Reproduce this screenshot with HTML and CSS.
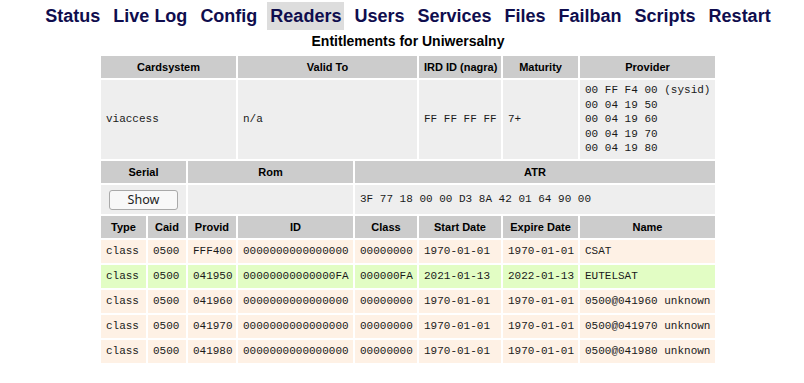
FILE: index.html
```html
<!DOCTYPE html>
<html>
<head>
<meta charset="utf-8">
<title>Readers - Entitlements</title>
<link rel="stylesheet" href="styles.css">
</head>
<body>
<div class="page">
  <nav class="nav">
    <a class="nav-item">Status</a>
    <a class="nav-item">Live Log</a>
    <a class="nav-item">Config</a>
    <a class="nav-item active">Readers</a>
    <a class="nav-item">Users</a>
    <a class="nav-item">Services</a>
    <a class="nav-item">Files</a>
    <a class="nav-item">Failban</a>
    <a class="nav-item">Scripts</a>
    <a class="nav-item">Restart</a>
  </nav>
  <div class="title">Entitlements for Uniwersalny</div>
  <table class="ent">
    <colgroup>
      <col class="c-type"><col class="c-caid"><col class="c-provid"><col class="c-id">
      <col class="c-class"><col class="c-start"><col class="c-expire"><col class="c-name">
    </colgroup>
    <tr class="head">
      <th colspan="3">Cardsystem</th>
      <th colspan="2">Valid To</th>
      <th>IRD ID (nagra)</th>
      <th>Maturity</th>
      <th>Provider</th>
    </tr>
    <tr class="info">
      <td colspan="3">viaccess</td>
      <td colspan="2">n/a</td>
      <td>FF FF FF FF</td>
      <td>7+</td>
      <td class="prov">00 FF F4 00 (sysid)<br>00 04 19 50<br>00 04 19 60<br>00 04 19 70<br>00 04 19 80</td>
    </tr>
    <tr class="head">
      <th colspan="2">Serial</th>
      <th colspan="2">Rom</th>
      <th colspan="4">ATR</th>
    </tr>
    <tr class="info">
      <td colspan="2" class="btn-cell"><button class="show-btn" type="button">Show</button></td>
      <td colspan="2"></td>
      <td colspan="4">3F 77 18 00 00 D3 8A 42 01 64 90 00</td>
    </tr>
    <tr class="head">
      <th>Type</th>
      <th>Caid</th>
      <th>Provid</th>
      <th>ID</th>
      <th>Class</th>
      <th>Start Date</th>
      <th>Expire Date</th>
      <th>Name</th>
    </tr>
    <tr class="row expired">
      <td>class</td><td>0500</td><td>FFF400</td><td>0000000000000000</td><td>00000000</td><td>1970-01-01</td><td>1970-01-01</td><td>CSAT</td>
    </tr>
    <tr class="row valid">
      <td>class</td><td>0500</td><td>041950</td><td>00000000000000FA</td><td>000000FA</td><td>2021-01-13</td><td>2022-01-13</td><td>EUTELSAT</td>
    </tr>
    <tr class="row expired">
      <td>class</td><td>0500</td><td>041960</td><td>0000000000000000</td><td>00000000</td><td>1970-01-01</td><td>1970-01-01</td><td>0500@041960 unknown</td>
    </tr>
    <tr class="row expired">
      <td>class</td><td>0500</td><td>041970</td><td>0000000000000000</td><td>00000000</td><td>1970-01-01</td><td>1970-01-01</td><td>0500@041970 unknown</td>
    </tr>
    <tr class="row expired">
      <td>class</td><td>0500</td><td>041980</td><td>0000000000000000</td><td>00000000</td><td>1970-01-01</td><td>1970-01-01</td><td>0500@041980 unknown</td>
    </tr>
  </table>
</div>
</body>
</html>
```

FILE: styles.css
```css
html, body {
  margin: 0;
  padding: 0;
  background: #ffffff;
}

.page {
  padding: 2px 0 0 12px;
  font-family: "Liberation Sans", Arial, sans-serif;
  color: #000;
}

.nav {
  display: flex;
  justify-content: center;
  gap: 7px;
}

.nav-item {
  font-size: 18px;
  font-weight: bold;
  line-height: 22px;
  padding: 3px 3px;
  color: #0f0d4e;
  text-decoration: none;
}

.nav-item.active {
  background: #dddddd;
}

.title {
  margin-top: 2px;
  text-align: center;
  font-size: 14px;
  font-weight: bold;
  line-height: 18px;
}

.ent {
  margin: 4px auto 0;
  width: 618px;
  table-layout: fixed;
  border-collapse: separate;
  border-spacing: 2px;
}

.c-type { width: 45px; }
.c-caid { width: 38px; }
.c-provid { width: 48px; }
.c-id { width: 115px; }
.c-class { width: 62px; }
.c-start { width: 82px; }
.c-expire { width: 75px; }
.c-name { width: 135px; }

.ent th {
  background: #cccccc;
  font-size: 11px;
  font-weight: bold;
  line-height: 14px;
  padding: 4px 5px;
  text-align: center;
  white-space: nowrap;
}

.ent td {
  font-family: "Liberation Mono", "Courier New", monospace;
  font-size: 11px;
  line-height: 15px;
  padding: 4px 5px;
  text-align: left;
  white-space: nowrap;
  color: #1a1a1a;
  overflow: hidden;
}

.info td {
  background: #eeeeee;
}

.info td.prov {
  padding: 3px 5px;
  line-height: 14.6px;
}

.btn-cell {
  text-align: center !important;
  padding: 5px 5px 4px !important;
}

.show-btn {
  display: block;
  margin: 0 auto;
  width: 69px;
  height: 20px;
  padding: 0;
  font-family: "Noto Sans", "Open Sans", sans-serif;
  font-size: 12.5px;
  line-height: 18px;
  color: #222;
  background: #f8f8f8;
  border: 1px solid #a9a9a9;
  border-radius: 3px;
}

.row.expired td {
  background: #fef1e5;
}

.row.valid td {
  background: #e2fdc4;
}
```
